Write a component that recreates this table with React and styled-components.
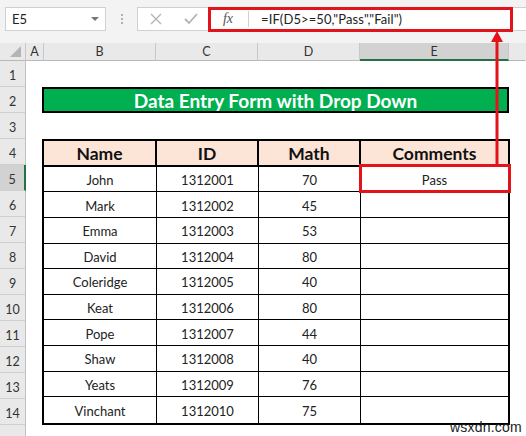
import React from 'react';
import styled, { createGlobalStyle } from 'styled-components';

const Global = createGlobalStyle`
  html, body { margin: 0; padding: 0; background: #fff; }
  body { width: 526px; height: 436px; overflow: hidden; font-family: Lato, "Noto Sans", sans-serif; }
  * { box-sizing: border-box; }
`;

const Screen = styled.div`
  position: relative;
  width: 526px;
  height: 436px;
  overflow: hidden;
  background: #fff;
`;

const Toolbar = styled.div`
  height: 43px;
  background: #f3f3f3;
  display: flex;
  align-items: flex-start;
  padding: 7px 0 0 5px;
`;

const NameBox = styled.div`
  width: 101px;
  height: 24px;
  background: #fff;
  border: 1px solid #d0d0d0;
  display: flex;
  align-items: center;
  justify-content: space-between;
  padding: 0 6px 0 6px;
  font-size: 13px;
  color: #222;
`;

const Caret = styled.span`
  width: 0;
  height: 0;
  border-left: 4px solid transparent;
  border-right: 4px solid transparent;
  border-top: 4px solid #777;
`;

const Grip = styled.div`
  width: 31px;
  height: 24px;
  display: flex;
  flex-direction: column;
  align-items: center;
  justify-content: center;
  gap: 2px;
  span { width: 2px; height: 2px; background: #b0b0b0; }
`;

const FormulaBox = styled.div`
  flex: 1;
  height: 24px;
  background: #fff;
  border: 1px solid #d0d0d0;
  border-right: none;
  display: flex;
  align-items: center;
`;

const IconSlot = styled.div`
  width: ${p => p.$w}px;
  height: 22px;
  display: flex;
  align-items: center;
  justify-content: center;
`;

const Fx = styled.span`
  font-family: "Liberation Serif", "DejaVu Serif", serif;
  font-style: italic;
  font-size: 14px;
  color: #555;
`;

const Divider = styled.span`
  width: 1px;
  height: 16px;
  background: #d0d0d0;
  margin-right: 12px;
`;

const FormulaText = styled.span`
  font-size: 13px;
  color: #222;
  white-space: nowrap;
  letter-spacing: 0.1px;
`;

const COLS = '26px 18px 112px 102px 102px 149px 17px';

const ColHeader = styled.div`
  display: grid;
  grid-template-columns: ${COLS};
  height: 18px;
  background: #fff;
`;

const ColCell = styled.div`
  background: ${p => (p.$sel ? '#d2d2d2' : '#e9e9e9')};
  border-right: 1px solid ${p => (p.$last ? 'transparent' : '#c8c8c8')};
  border-bottom: ${p => (p.$sel ? '2px solid #217346' : '1px solid #b8b8b8')};
  display: flex;
  align-items: center;
  justify-content: center;
  font-size: 12.5px;
  color: #333;
  position: relative;
`;

const Corner = styled.div`
  position: absolute;
  right: 4px;
  bottom: 3px;
  width: 0;
  height: 0;
  border-left: 11px solid transparent;
  border-bottom: 11px solid #b4b4b4;
`;

const Sheet = styled.div`
  display: grid;
  grid-template-columns: ${COLS};
  grid-auto-rows: 26px;
`;

const RowHead = styled.div`
  grid-column: 1;
  grid-row: ${p => p.$r};
  background: ${p => (p.$sel ? '#d2d2d2' : '#e9e9e9')};
  border-bottom: 1px solid #cfcfcf;
  border-right: ${p => (p.$sel ? '2px solid #217346' : '1px solid #c0c0c0')};
  display: flex;
  align-items: center;
  justify-content: center;
  padding-top: 4px;
  font-size: 12.5px;
  color: #333;
`;

const Title = styled.div`
  grid-column: 3 / 7;
  grid-row: 2;
  margin-left: -2px;
  background: #00b050;
  border: 2px solid #000;
  color: #fff;
  font-weight: 700;
  font-size: 19px;
  display: flex;
  align-items: center;
  justify-content: center;
  padding-top: 1px;
`;

const Table = styled.div`
  grid-column: 3 / 7;
  grid-row: 4 / 15;
  margin-left: -2px;
  margin-right: -1px;
  border: 2px solid #000;
  display: grid;
  grid-template-columns: 113px 102px 102px 1fr;
  grid-template-rows: repeat(11, 1fr);
`;

const HeadCell = styled.div`
  background: #fce4d6;
  border-right: ${p => (p.$last ? 'none' : '2px solid #000')};
  border-bottom: 2px solid #000;
  font-weight: 700;
  font-size: 17.5px;
  color: #111;
  display: flex;
  align-items: center;
  justify-content: center;
  padding-top: 1px;
`;

const Cell = styled.div`
  background: #fff;
  border-right: ${p => (p.$last ? 'none' : '1px solid #000')};
  border-bottom: ${p => (p.$bottom ? 'none' : '1px solid #000')};
  font-size: 13px;
  color: #222;
  display: flex;
  align-items: center;
  justify-content: center;
  padding-top: 2px;
`;

const RedBox = styled.div`
  position: absolute;
  left: ${p => p.$x}px;
  top: ${p => p.$y}px;
  width: ${p => p.$w}px;
  height: ${p => p.$h}px;
  border: 3px solid #e3131b;
  pointer-events: none;
`;

const Arrow = styled.svg`
  position: absolute;
  left: 490px;
  top: 31px;
`;

const Watermark = styled.div`
  position: absolute;
  left: 450px;
  top: 419px;
  font-family: "Liberation Sans", Arial, sans-serif;
  font-size: 14px;
  color: #222;
  letter-spacing: 0.2px;
`;

const data = [
  ['John', '1312001', '70', 'Pass'],
  ['Mark', '1312002', '45', ''],
  ['Emma', '1312003', '53', ''],
  ['David', '1312004', '80', ''],
  ['Coleridge', '1312005', '40', ''],
  ['Keat', '1312006', '80', ''],
  ['Pope', '1312007', '44', ''],
  ['Shaw', '1312008', '40', ''],
  ['Yeats', '1312009', '76', ''],
  ['Vinchant', '1312010', '75', ''],
];

const headers = ['Name', 'ID', 'Math', 'Comments'];
const letters = ['A', 'B', 'C', 'D', 'E', ''];

export default function App() {
  return (
    <Screen>
      <Global />
      <Toolbar>
        <NameBox>
          E5
          <Caret />
        </NameBox>
        <Grip>
          <span />
          <span />
          <span />
        </Grip>
        <FormulaBox>
          <IconSlot $w={36}>
            <svg width="12" height="12" viewBox="0 0 12 12">
              <path d="M1 1 L11 11 M11 1 L1 11" stroke="#b4b4b4" strokeWidth="1.4" fill="none" />
            </svg>
          </IconSlot>
          <IconSlot $w={34}>
            <svg width="14" height="12" viewBox="0 0 14 12">
              <path d="M1 6 L5 10 L13 1" stroke="#b4b4b4" strokeWidth="1.8" fill="none" />
            </svg>
          </IconSlot>
          <IconSlot $w={40}>
            <Fx>fx</Fx>
          </IconSlot>
          <Divider />
          <FormulaText>=IF(D5&gt;=50,"Pass","Fail")</FormulaText>
        </FormulaBox>
      </Toolbar>

      <ColHeader>
        <ColCell>
          <Corner />
        </ColCell>
        {letters.map((l, i) => (
          <ColCell key={i} $sel={l === 'E'} $last={i === letters.length - 1}>
            {l}
          </ColCell>
        ))}
      </ColHeader>

      <Sheet>
        {Array.from({ length: 15 }, (_, i) => (
          <RowHead key={i} $r={i + 1} $sel={i + 1 === 5}>
            {i < 14 ? i + 1 : ''}
          </RowHead>
        ))}
        <Title>Data Entry Form with Drop Down</Title>
        <Table>
          {headers.map((h, i) => (
            <HeadCell key={h} $last={i === 3}>
              {h}
            </HeadCell>
          ))}
          {data.map((row, r) =>
            row.map((v, c) => (
              <Cell key={`${r}-${c}`} $last={c === 3} $bottom={r === data.length - 1}>
                {v}
              </Cell>
            ))
          )}
        </Table>
      </Sheet>

      <RedBox $x={208} $y={7} $w={305} $h={25} />
      <RedBox $x={359} $y={164} $w={152} $h={29} />
      <Arrow width="14" height="134" viewBox="0 0 14 134">
        <polygon points="7,0 1,11 13,11" fill="#e3131b" />
        <rect x="5.5" y="9" width="3" height="125" fill="#e3131b" />
      </Arrow>
      <Watermark>wsxdn.com</Watermark>
    </Screen>
  );
}
